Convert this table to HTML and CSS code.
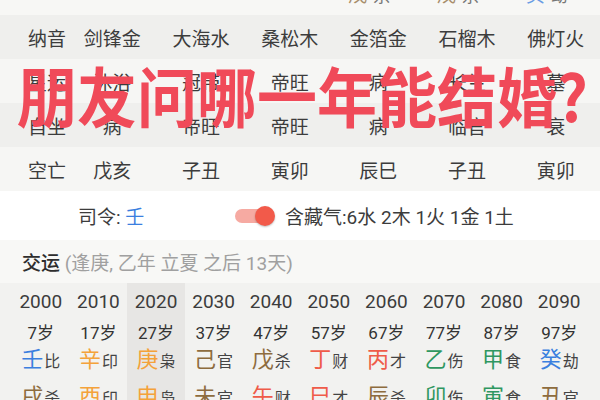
FILE: index.html
```html
<!DOCTYPE html>
<html lang="zh">
<head>
<meta charset="utf-8">
<link rel="stylesheet" href="styles.css">
</head>
<body>
<div class="page">
  <div class="trow r0">
    <div class="label"></div>
    <div class="cell"></div>
    <div class="cell"></div>
    <div class="cell"></div>
    <div class="cell"><span class="clip"><span class="g c-brown">戊</span><span class="s">杀</span></span></div>
    <div class="cell"><span class="clip"><span class="g c-brown">戊</span><span class="s">杀</span></span></div>
    <div class="cell"><span class="clip"><span class="g c-blue">癸</span><span class="s">劫</span></span></div>
  </div>
  <div class="trow dark">
    <div class="label">纳音</div>
    <div class="cell">剑锋金</div>
    <div class="cell">大海水</div>
    <div class="cell">桑松木</div>
    <div class="cell">金箔金</div>
    <div class="cell">石榴木</div>
    <div class="cell">佛灯火</div>
  </div>
  <div class="trow light">
    <div class="label">星运</div>
    <div class="cell">沐浴</div>
    <div class="cell">冠带</div>
    <div class="cell">帝旺</div>
    <div class="cell">病</div>
    <div class="cell">长生</div>
    <div class="cell">墓</div>
  </div>
  <div class="trow dark">
    <div class="label">自坐</div>
    <div class="cell">病</div>
    <div class="cell">帝旺</div>
    <div class="cell">帝旺</div>
    <div class="cell">病</div>
    <div class="cell">临官</div>
    <div class="cell">衰</div>
  </div>
  <div class="trow light">
    <div class="label">空亡</div>
    <div class="cell">戊亥</div>
    <div class="cell">子丑</div>
    <div class="cell">寅卯</div>
    <div class="cell">辰巳</div>
    <div class="cell">子丑</div>
    <div class="cell">寅卯</div>
  </div>
  <div class="siling">
    <span class="sl">司令: <span class="c-blue">壬</span></span>
    <span class="toggle"><span class="knob"></span></span>
    <span class="hidden-qi">含藏气:6水 2木 1火 1金 1土</span>
  </div>
  <div class="jy-head"><span class="jy-text"><b>交运</b> <span class="muted">(逢庚, 乙年 立夏 之后 13天)</span></span></div>
  <div class="dayun">
    <div class="col"><div class="yr">2000</div><div class="age">7岁</div><div class="gz"><span class="g c-blue">壬</span><span class="s">比</span></div><div class="gz"><span class="g c-brown">戌</span><span class="s">杀</span></div></div>
    <div class="col"><div class="yr">2010</div><div class="age">17岁</div><div class="gz"><span class="g c-orange">辛</span><span class="s">印</span></div><div class="gz"><span class="g c-orange">酉</span><span class="s">印</span></div></div>
    <div class="col cur"><div class="yr">2020</div><div class="age">27岁</div><div class="gz"><span class="g c-orange">庚</span><span class="s">枭</span></div><div class="gz"><span class="g c-orange">申</span><span class="s">枭</span></div></div>
    <div class="col"><div class="yr">2030</div><div class="age">37岁</div><div class="gz"><span class="g c-brown">己</span><span class="s">官</span></div><div class="gz"><span class="g c-brown">未</span><span class="s">官</span></div></div>
    <div class="col"><div class="yr">2040</div><div class="age">47岁</div><div class="gz"><span class="g c-brown">戊</span><span class="s">杀</span></div><div class="gz"><span class="g c-red">午</span><span class="s">财</span></div></div>
    <div class="col"><div class="yr">2050</div><div class="age">57岁</div><div class="gz"><span class="g c-red">丁</span><span class="s">财</span></div><div class="gz"><span class="g c-red">巳</span><span class="s">才</span></div></div>
    <div class="col"><div class="yr">2060</div><div class="age">67岁</div><div class="gz"><span class="g c-red">丙</span><span class="s">才</span></div><div class="gz"><span class="g c-brown">辰</span><span class="s">杀</span></div></div>
    <div class="col"><div class="yr">2070</div><div class="age">77岁</div><div class="gz"><span class="g c-green">乙</span><span class="s">伤</span></div><div class="gz"><span class="g c-green">卯</span><span class="s">伤</span></div></div>
    <div class="col"><div class="yr">2080</div><div class="age">87岁</div><div class="gz"><span class="g c-green">甲</span><span class="s">食</span></div><div class="gz"><span class="g c-green">寅</span><span class="s">食</span></div></div>
    <div class="col"><div class="yr">2090</div><div class="age">97岁</div><div class="gz"><span class="g c-blue">癸</span><span class="s">劫</span></div><div class="gz"><span class="g c-brown">丑</span><span class="s">官</span></div></div>
  </div>
  <div class="overlay">朋友问哪一年能结婚?</div>
</div>
</body>
</html>
```

FILE: styles.css
```css
* { box-sizing: border-box; }
html, body { margin: 0; padding: 0; }
body {
  width: 600px;
  height: 400px;
  overflow: hidden;
  background: #f7f7f5;
  font-family: "Roboto", "Noto Sans CJK SC", sans-serif;
  color: #3c3c3c;
}
.page { position: relative; width: 600px; height: 400px; overflow: hidden; }

.trow {
  display: grid;
  grid-template-columns: 68px repeat(6, 1fr);
  height: 44px;
  align-items: center;
  font-size: 19px;
}
.trow.dark { background: #efefed; }
.trow.light { background: #f6f6f4; }
.label { padding-left: 28px; white-space: nowrap; }
.cell { text-align: center; white-space: nowrap; }

.r0 { height: 15px; align-items: start; overflow: hidden; background: #f7f7f5; }
.r0 .cell {
  height: 15px;
  overflow: hidden;
  display: flex;
  justify-content: center;
  align-items: flex-start;
}
.clip { display: block; margin-top: -14px; margin-right: 18px; line-height: 20px; white-space: nowrap; }

.g { font-size: 22px; }
.s { font-size: 16px; color: #444; margin-left: 1px; }
.r0 .g { font-size: 19px; opacity: 0.75; }
.r0 .s { font-size: 17px; color: #777; margin-left: 6px; }

.c-blue { color: #3b7fdf; }
.c-orange { color: #f4a23a; }
.c-brown { color: #8e6c3e; }
.c-red { color: #ef5b49; }
.c-green { color: #2f9760; }

.siling {
  display: flex;
  align-items: center;
  height: 49px;
  background: #ffffff;
  padding-left: 78px;
  font-size: 19px;
}
.sl { width: 157px; white-space: nowrap; }
.toggle {
  position: relative;
  width: 38px;
  height: 14px;
  border-radius: 7px;
  background: #f6aaa2;
  margin-right: 12px;
}
.knob {
  position: absolute;
  right: -2px;
  top: -3px;
  width: 20px;
  height: 20px;
  border-radius: 50%;
  background: #f25a4a;
  box-shadow: 0 1px 2px rgba(0,0,0,0.25);
}
.hidden-qi { white-space: nowrap; }

.jy-head {
  height: 43px;
  display: flex;
  align-items: center;
  padding-left: 22px;
  font-size: 19px;
  background: #f8f8f6;
}
.jy-text { white-space: pre; }
.jy-head b { font-weight: 500; color: #2e2e2e; }
.muted { color: #a0a0a0; }

.dayun {
  display: grid;
  grid-template-columns: repeat(10, 1fr);
  padding: 0 12px;
  background: #f2f2f0;
  height: 130px;
}
.col {
  display: flex;
  flex-direction: column;
  align-items: center;
  padding-top: 8px;
}
.col.cur { background: #e7e6e4; }
.yr { font-size: 19px; height: 22px; line-height: 22px; }
.age { font-size: 17px; height: 22px; line-height: 22px; margin-top: 9px; color: #333; }
.gz { height: 28px; line-height: 28px; white-space: nowrap; margin-top: 2px; }
.gz + .gz { margin-top: 9px; }

.overlay {
  position: absolute;
  left: 17px;
  top: 62px;
  font-family: "Noto Sans CJK SC", sans-serif;
  font-weight: 700;
  font-size: 60px;
  line-height: 60px;
  color: #f04a59;
  white-space: nowrap;
  transform: scaleY(1.07);
  transform-origin: 0 0;
}
```
